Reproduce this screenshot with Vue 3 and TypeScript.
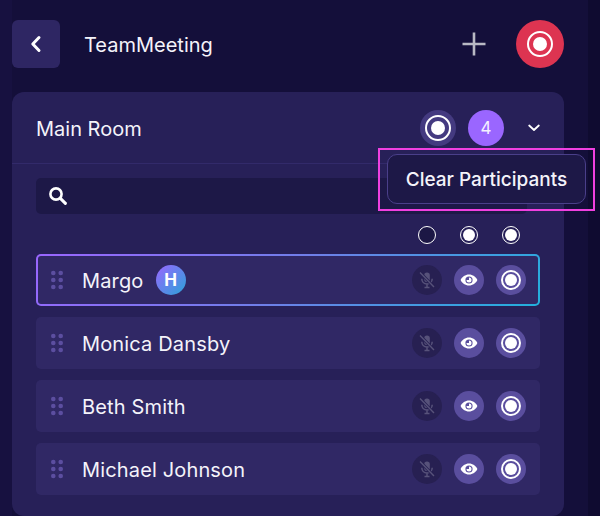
<script setup lang="ts">
const people = [
  { name: 'Margo', host: true },
  { name: 'Monica Dansby', host: false },
  { name: 'Beth Smith', host: false },
  { name: 'Michael Johnson', host: false },
]
</script>

<template>
  <div class="page">
    <header class="top">
      <button class="back" aria-label="Back">
        <svg width="14" height="18" viewBox="0 0 14 18"><path d="M10 2.500 3.800 9l6.200 6.500" fill="none" stroke="#fff" stroke-width="3" stroke-linecap="round" stroke-linejoin="round"/></svg>
      </button>
      <span class="title">TeamMeeting</span>
      <svg class="plus" width="24" height="24" viewBox="0 0 24 24"><path d="M12 .5v23M.5 12h23" stroke="#b9b9c4" stroke-width="2.600" fill="none"/></svg>
      <div class="rec"><span class="ring big"></span></div>
    </header>

    <section class="panel">
      <div class="room">
        <span class="room-name">Main Room</span>
        <div class="room-ring"><span class="ring big"></span></div>
        <div class="count">4</div>
        <svg class="chev" width="12" height="8" viewBox="0 0 12 8"><path d="M1.200 1.500 6 6l4.800-4.500" fill="none" stroke="#fff" stroke-width="1.800" stroke-linecap="round" stroke-linejoin="round"/></svg>
      </div>

      <div class="body">
        <div class="search">
          <svg width="20" height="20" viewBox="0 0 20 20"><circle cx="8" cy="8" r="5.600" fill="none" stroke="#fff" stroke-width="2.600"/><path d="m12.400 12.400 5 5" stroke="#fff" stroke-width="3" stroke-linecap="round"/></svg>
        </div>
        <div class="legend">
          <span class="dot-off"></span>
          <span class="ring small"></span>
          <span class="ring small"></span>
        </div>
        <div class="rows">
          <div v-for="p in people" :key="p.name" class="row" :class="{ active: p.host }">
            <svg class="grip" width="13" height="20" viewBox="0 0 13 20">
              <g fill="#5c4ea0">
                <circle cx="2.300" cy="3" r="2.300"/><circle cx="9.700" cy="3" r="2.300"/>
                <circle cx="2.300" cy="10" r="2.300"/><circle cx="9.700" cy="10" r="2.300"/>
                <circle cx="2.300" cy="17" r="2.300"/><circle cx="9.700" cy="17" r="2.300"/>
              </g>
            </svg>
            <span class="name">{{ p.name }}</span>
            <span v-if="p.host" class="host">H</span>
            <div class="actions">
              <div class="act mute">
                <svg width="18" height="18" viewBox="0 0 18 18">
                  <rect x="6.200" y="1.500" width="5.600" height="9.500" rx="2.800" fill="#57527a"/>
                  <path d="M3.800 7.800c0 3 2.200 5.200 5.200 5.200s5.200-2.200 5.200-5.200M9 13v3.200M6.500 16.400h5" fill="none" stroke="#57527a" stroke-width="1.500"/>
                  <path d="M2 1.500 16 16" stroke="#272052" stroke-width="3"/>
                  <path d="M2 1.500 16 16" stroke="#57527a" stroke-width="1.400"/>
                </svg>
              </div>
              <div class="act">
                <svg width="18" height="14" viewBox="0 0 18 14">
                  <path fill-rule="evenodd" fill="#fff" d="M9 1.500c3.800 0 6.900 2.400 8.400 5.500C15.900 10.100 12.800 12.500 9 12.500S2.100 10.100.6 7C2.100 3.900 5.200 1.500 9 1.500Zm0 1.900A3.600 3.600 0 1 0 9 10.600 3.600 3.600 0 0 0 9 3.400Z"/>
                  <path fill="#fff" d="M9 4.500A2.500 2.500 0 1 1 6.500 7H9Z"/>
                </svg>
              </div>
              <div class="act"><span class="ring mid"></span></div>
            </div>
          </div>
        </div>
      </div>

      <div class="menu">Clear Participants</div>
    </section>

    <div class="highlight"></div>
  </div>
</template>

<style>
html, body { margin: 0; background: #120e38; }
</style>

<style scoped>
.page {
  position: relative;
  width: 600px;
  height: 516px;
  overflow: hidden;
  box-sizing: border-box;
  padding: 20px 36px 0 12px;
  background: linear-gradient(90deg, #171140 0, #171140 12px, #140f3a 12px, #140f3a 588px, #0f0b30 588px);
  font-family: Inter, "Noto Sans", sans-serif;
  color: #f4f3fa;
}
.top { display: flex; align-items: center; height: 48px; }
.back {
  width: 48px; height: 48px; border: 0; padding: 0; border-radius: 6px; background: #2e2663;
  display: flex; align-items: center; justify-content: center;
}
.title { margin-left: 24px; padding-top: 2px; font-size: 20px; line-height: 24px; flex: 1; }
.plus { margin-right: 30px; }
.rec {
  width: 48px; height: 48px; border-radius: 50%; background: #dd3451;
  display: flex; align-items: center; justify-content: center;
}
.ring {
  display: block; box-sizing: border-box; border-radius: 50%; border-style: solid; border-color: #fff;
  background: #fff; background-clip: content-box;
}
.ring.big { width: 26px; height: 26px; border-width: 2px; padding: 4px; }
.ring.mid { width: 20px; height: 20px; border-width: 2px; padding: 2px; }
.ring.small { width: 18px; height: 18px; border-width: 1px; padding: 2px; }
.dot-off { display: block; box-sizing: border-box; width: 18px; height: 18px; border-radius: 50%; border: 1px solid #fff; background: #1c1745; }
.panel {
  position: relative; margin-top: 24px; width: 552px; height: 424px; border-radius: 12px; background: #272058;
}
.room {
  display: flex; align-items: center; height: 72px; box-sizing: border-box; padding: 0 24px 0 24px;
  border-bottom: 1px solid #322a6a;
}
.room-name { flex: 1; padding-top: 2px; font-size: 20px; line-height: 24px; }
.room-ring {
  width: 36px; height: 36px; border-radius: 50%; background: #443a80;
  display: flex; align-items: center; justify-content: center;
}
.count {
  width: 36px; height: 36px; margin-left: 12px; border-radius: 50%; background: #9a66ff;
  display: flex; align-items: center; justify-content: center; font-size: 17px; color: #f4f0ff;
}
.chev { margin-left: 24px; margin-right: 0; }
.body { padding: 14px 24px 0; }
.search {
  height: 36px; border-radius: 5px; background: #1d1847; width: 491px;
  display: flex; align-items: center; padding-left: 12px; box-sizing: border-box;
}
.legend {
  display: flex; justify-content: flex-end; gap: 24px; height: 18px; margin-top: 12px; padding-right: 20px;
}
.rows { display: flex; flex-direction: column; gap: 11px; margin-top: 10px; }
.row {
  position: relative; display: flex; align-items: center; box-sizing: border-box; height: 52px; width: 504px;
  padding: 0 14px 0 15px; border-radius: 5px; background: #302865;
}
.row.active {
  border: 2px solid transparent;
  padding: 0 12px 0 13px;
  background:
    linear-gradient(#302865, #302865) padding-box,
    linear-gradient(135deg, #9a66ff 0%, #6f7fe8 50%, #22b0dc 100%) border-box;
}
.grip { flex: none; }
.name { margin-left: 18px; padding-top: 2px; font-size: 20px; line-height: 26px; letter-spacing: .15px; }
.host {
  margin-left: 12px; width: 30px; height: 30px; border-radius: 50%;
  background: linear-gradient(135deg, #9a66ff, #2aa3d8);
  display: flex; align-items: center; justify-content: center; font-size: 17px; font-weight: 700; color: #fff;
}
.actions { margin-left: auto; display: flex; gap: 12px; }
.act {
  width: 30px; height: 30px; border-radius: 50%; background: #5a4e9e;
  display: flex; align-items: center; justify-content: center;
}
.act.mute { background: #272052; }
.menu {
  position: absolute; left: 375px; top: 62px; width: 199px; height: 50px; box-sizing: border-box;
  border: 1px solid #4a3f8a; border-radius: 10px; background: #1d1847;
  display: flex; align-items: center; justify-content: center; font-size: 19px; font-weight: 500; color: #f4f3fa;
}
.highlight {
  position: absolute; left: 378px; top: 148px; width: 217px; height: 63px; box-sizing: border-box;
  border: 2px solid #f040e0; pointer-events: none;
}
</style>
